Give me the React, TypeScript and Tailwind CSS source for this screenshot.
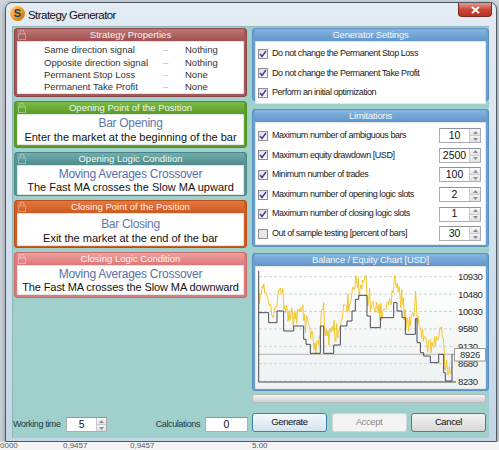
import React from 'react';

const steps: [number, number][] = [
  [20, 200], [50, 230], [75, 195], [95, 255], [125, 240], [155, 280], [162, 295], [175, 322],
  [205, 240], [215, 322], [245, 297], [265, 240], [285, 225], [300, 195], [310, 160], [320, 148],
  [345, 210], [355, 245], [385, 215], [425, 170], [435, 195], [450, 215], [460, 265], [490, 218],
  [495, 290], [505, 320], [515, 330], [535, 350], [560, 325], [575, 380], [580, 405], [600, 325],
];

const yLabels = ['10930', '10480', '10030', '9580', '9130', '8680', '8230'];

function Lock() {
  return (
    <svg className="absolute left-[1px] top-[0px]" width="8" height="11" viewBox="0 0 8 11">
      <path d="M2 5 V3 a2 2 0 0 1 4 0 V5" fill="none" stroke="white" strokeOpacity="0.35" strokeWidth="1" />
      <rect x="0.5" y="5" width="7" height="5.5" fill="none" stroke="white" strokeOpacity="0.35" strokeWidth="1" />
    </svg>
  );
}

function LeftPanel({ title, outer, head, children }: { title: string; outer: string; head: string; children: React.ReactNode }) {
  return (
    <div className={`rounded-[3px] border px-[2px] pb-[2px] flex flex-col ${outer}`}>
      <div className={`relative h-[12px] shrink-0 flex items-center justify-center text-[9.5px] leading-none text-white/95 ${head}`}>
        <Lock />
        {title}
      </div>
      <div className="flex-1 bg-white border border-black/10 rounded-[1px] flex flex-col items-center">{children}</div>
    </div>
  );
}

function RightPanel({ title, className, children }: { title: string; className: string; children: React.ReactNode }) {
  return (
    <div className={`rounded-[3px] border border-[#5b8fc2] bg-[#6a9fd2] px-[2px] pb-[2px] flex flex-col ${className}`}>
      <div className="h-[12px] shrink-0 flex items-center justify-center text-[9.5px] tracking-[-0.2px] leading-none text-white/95 bg-gradient-to-b from-[#86b6e0] to-[#6196cb]">
        {title}
      </div>
      <div className="flex-1 bg-white border border-black/10 rounded-[1px]">{children}</div>
    </div>
  );
}

function Check({ on = true }: { on?: boolean }) {
  return (
    <div className={`w-[10px] h-[10px] shrink-0 border border-[#8e8f8f] flex items-center justify-center ${on ? 'bg-gradient-to-br from-[#dcdcdc] to-[#ffffff]' : 'bg-[#e6e6e6]'}`}>
      {on && (
        <svg width="8" height="8" viewBox="0 0 8 8">
          <path d="M1 4 L3 6.5 L7 1" fill="none" stroke="#3b3ba6" strokeWidth="1.4" />
        </svg>
      )}
    </div>
  );
}

function Spin({ w = 11 }: { w?: number }) {
  return (
    <div className="flex flex-col h-full border-l border-[#c8ccd2]" style={{ width: w }}>
      <div className="flex-1 flex items-center justify-center bg-gradient-to-b from-[#f8f8f8] to-[#e4e4e4] border-b border-[#c8ccd2]">
        <svg width="5" height="3" viewBox="0 0 5 3"><path d="M0 3 L2.5 0 L5 3Z" fill="#8a8f96" /></svg>
      </div>
      <div className="flex-1 flex items-center justify-center bg-gradient-to-b from-[#f4f4f4] to-[#e0e0e0]">
        <svg width="5" height="3" viewBox="0 0 5 3"><path d="M0 0 L2.5 3 L5 0Z" fill="#8a8f96" /></svg>
      </div>
    </div>
  );
}

function NumBox({ value }: { value: string }) {
  return (
    <div className="ml-auto mr-[4px] w-[42px] h-[15px] flex border border-[#abadb3] border-t-[#8e9299] bg-white">
      <div className="flex-1 flex items-center justify-center text-[10.5px] text-[#111]">{value}</div>
      <Spin />
    </div>
  );
}

function LimitRow({ label, value, on = true }: { label: string; value: string; on?: boolean }) {
  return (
    <div className="h-[19.6px] flex items-center pl-[2px]">
      <Check on={on} />
      <span className="ml-[4px] text-[9px] tracking-[-0.45px] text-[#1a1a1a]">{label}</span>
      <NumBox value={value} />
    </div>
  );
}

function Chart() {
  const tx = (z: number) => z / 3 - 4;
  const ty = (z: number) => z / 3 - 21;
  let bal = `M${tx(steps[0][0])},${ty(steps[0][1])}`;
  for (let i = 1; i < steps.length; i++) bal += ` H${tx(steps[i][0])} V${ty(steps[i][1])}`;
  bal += ` H${tx(602)}`;
  const lvl = (x: number) => {
    let l = steps[0][1];
    for (const [sx, sl] of steps) if (x >= sx) l = sl;
    return l;
  };
  let s = 11;
  const rnd = () => (s = (s * 9301 + 49297) % 233280) / 233280;
  const pts: string[] = [];
  for (let x = 20; x <= 602; x += 2.6) {
    let off = 8 + 42 * Math.abs(Math.sin(x / 21)) + rnd() * 38;
    if (rnd() < 0.12) off -= 30;
    const y = Math.max(88, Math.min(402, lvl(x) - off));
    pts.push(`${tx(x).toFixed(1)},${ty(y).toFixed(1)}`);
  }
  return (
    <svg width="232" height="121" viewBox="0 0 232 121" className="block">
      {yLabels.map((l, i) => {
        const y = 9.7 + i * 17.4;
        return (
          <g key={l}>
            <line x1="3" x2="199" y1={y} y2={y} stroke="#c9c9c9" strokeDasharray="3 2" strokeWidth="0.8" />
            <text x="202" y={y + 3.5} fontSize="9.5" letterSpacing="-0.4" fill="#2a2a2a" fontFamily="Liberation Sans, Arial, sans-serif">{l}</text>
          </g>
        );
      })}
      <line x1="3" x2="199" y1="87.3" y2="87.3" stroke="#b4b4b4" strokeWidth="1" />
      <polyline points={pts.join(' ')} fill="none" stroke="#f4c21c" strokeWidth="0.9" />
      <path d={bal} fill="none" stroke="#4a4a58" strokeWidth="1" />
      <line x1="2.7" x2="2.7" y1="4" y2="115" stroke="#4a4a4a" strokeWidth="1" />
      <line x1="2.7" x2="200" y1="115" y2="115" stroke="#4a4a4a" strokeWidth="1" />
      <rect x="198.5" y="81.5" width="31" height="12.5" fill="white" stroke="#9a9a9a" strokeWidth="1" />
      <text x="214" y="91" textAnchor="middle" fontSize="9.5" letterSpacing="-0.3" fill="#2a2a2a" fontFamily="Liberation Sans, Arial, sans-serif">8926</text>
    </svg>
  );
}

function PropRow({ label, value }: { label: string; value: string }) {
  return (
    <div className="grid grid-cols-[119px_22px_50px] h-[12.3px] items-center text-[9.5px] leading-none text-[#333]">
      <span>{label}</span>
      <span className="text-[#b8b8b8]">–</span>
      <span>{value}</span>
    </div>
  );
}

function Button({ label, kind }: { label: string; kind: 'focus' | 'disabled' | 'normal' }) {
  const cls =
    kind === 'focus'
      ? 'border-[#3c7fb1] bg-gradient-to-b from-[#f4f9fc] to-[#d6e4ee] text-[#111]'
      : kind === 'disabled'
      ? 'border-[#d0d6d6] bg-[#f4f4f4] text-[#8a8a8a]'
      : 'border-[#707070] bg-gradient-to-b from-[#f2f2f2] to-[#d8d8d8] text-[#111]';
  return (
    <div className={`h-[19px] w-[75px] rounded-[3px] border flex items-center justify-center text-[9.5px] tracking-[-0.4px] ${cls}`}>
      {label}
    </div>
  );
}

export default function App() {
  return (
    <div className="w-[499px] h-[450px] overflow-hidden bg-[#cfd6dc] font-['Liberation_Sans',Arial,sans-serif] flex flex-col">
      <div className="pt-[2px] pl-[5px]">
        <div className="w-[492px] h-[440px] rounded-t-[7px] border border-[#4b5866] bg-gradient-to-b from-[#e3ebf3] via-[#d3e1ee] to-[#c3d6e8] flex flex-col shadow-[0_2px_6px_rgba(0,0,0,0.35)]">
          <div className="h-[23px] shrink-0 flex items-start">
            <div className="mt-[3px] ml-[4px] w-[15px] h-[15px] rounded-full bg-gradient-to-br from-[#ffd36a] via-[#f0a02a] to-[#b86a10] flex items-center justify-center text-[11px] font-bold text-[#2a3a5a] leading-none">
              S
            </div>
            <div className="ml-[3px] mt-[4px] text-[11.5px] tracking-[-0.55px] text-[#111]">Strategy Generator</div>
            <div className="ml-auto mr-[4px] w-[34px] h-[14px] rounded-b-[4px] border border-[#7a2a22] border-t-0 bg-gradient-to-b from-[#e59a8c] via-[#c9473a] to-[#b8331f] flex items-center justify-center">
              <svg width="9" height="8" viewBox="0 0 9 8">
                <path d="M1 1 L8 7 M8 1 L1 7" stroke="white" strokeWidth="2" />
              </svg>
            </div>
          </div>
          <div className="h-[412px] ml-[6px] mr-[7px] bg-[#a0d0cb] border-l border-t border-[#8fb4b6] flex pt-[1px]">
            {/* left column */}
            <div className="w-[235px] flex flex-col">
              <div className="ml-[1px] w-[233px] flex flex-col gap-[4px]">
                <LeftPanel title="Strategy Properties" outer="h-[69px] border-[#8d4646] bg-[#a55858]" head="bg-gradient-to-b from-[#bd7676] to-[#a05050]">
                  <div className="pt-[2px] pl-[26px] w-full">
                    <PropRow label="Same direction signal" value="Nothing" />
                    <PropRow label="Opposite direction signal" value="Nothing" />
                    <PropRow label="Permanent Stop Loss" value="None" />
                    <PropRow label="Permanent Take Profit" value="None" />
                  </div>
                </LeftPanel>
                <LeftPanel title="Opening Point of the Position" outer="h-[47px] border-[#4f8e24] bg-[#5e9f2c]" head="bg-gradient-to-b from-[#7dbb45] to-[#5a9a28]">
                  <div className="pt-[1px] text-[12px] leading-[14px] tracking-[-0.3px] text-[#6478ac]">Bar Opening</div>
                  <div className="text-[11px] leading-[14px] text-[#111]">Enter the market at the beginning of the bar</div>
                </LeftPanel>
                <LeftPanel title="Opening Logic Condition" outer="h-[44px] border-[#4a8585] bg-[#5a9797]" head="bg-gradient-to-b from-[#72acac] to-[#4f8b8b]">
                  <div className="pt-[2px] text-[12px] leading-[13px] tracking-[-0.25px] text-[#5a6ea8]">Moving Averages Crossover</div>
                  <div className="text-[11px] leading-[13px] text-[#111]">The Fast MA crosses the Slow MA upward</div>
                </LeftPanel>
                <LeftPanel title="Closing Point of the Position" outer="h-[48px] border-[#b84e1a] bg-[#cf5d24]" head="bg-gradient-to-b from-[#e5793d] to-[#cc5920]">
                  <div className="pt-[3px] text-[12px] leading-[14px] tracking-[-0.3px] text-[#6478ac]">Bar Closing</div>
                  <div className="text-[11px] leading-[14px] text-[#111]">Exit the market at the end of the bar</div>
                </LeftPanel>
                <LeftPanel title="Closing Logic Condition" outer="h-[46px] border-[#c96a6a] bg-[#dd7c7c]" head="bg-gradient-to-b from-[#eca0a0] to-[#de7777]">
                  <div className="pt-[2px] text-[12px] leading-[13px] tracking-[-0.25px] text-[#5a6ea8]">Moving Averages Crossover</div>
                  <div className="text-[11px] leading-[13px] text-[#111] tracking-[-0.1px]">The Fast MA crosses the Slow MA downward</div>
                </LeftPanel>
              </div>
              <div className="mt-auto mb-[6px] h-[15px] flex items-center text-[9px] tracking-[-0.4px] text-[#1e3a3a]">
                <span className="w-[53px]">Working time</span>
                <div className="w-[41px] h-[15px] flex border border-[#abadb3] border-t-[#8e9299] bg-white">
                  <div className="flex-1 flex items-center justify-center text-[10.5px] text-[#111]">5</div>
                  <Spin w={10} />
                </div>
                <span className="ml-auto">Calculations</span>
                <div className="ml-[5px] w-[43px] h-[15px] border border-[#abadb3] border-t-[#8e9299] bg-white flex items-center justify-center text-[10.5px] text-[#111] tracking-normal">
                  0
                </div>
              </div>
            </div>
            {/* right column */}
            <div className="ml-[4px] w-[237px] flex flex-col">
              <RightPanel title="Generator Settings" className="h-[73px]">
                <div className="pt-[2px]">
                  {['Do not change the Permanent Stop Loss', 'Do not change the Permanent Take Profit', 'Perform an initial optimization'].map((t) => (
                    <div key={t} className="h-[19.5px] flex items-center pl-[2px]">
                      <Check />
                      <span className="ml-[4px] text-[9px] tracking-[-0.45px] text-[#1a1a1a]">{t}</span>
                    </div>
                  ))}
                </div>
              </RightPanel>
              <RightPanel title="Limitations" className="mt-[8px] h-[138px]">
                <div className="pt-[3px]">
                  <LimitRow label="Maximum number of ambiguous bars" value="10" />
                  <LimitRow label="Maximum equity drawdown [USD]" value="2500" />
                  <LimitRow label="Minimum number of trades" value="100" />
                  <LimitRow label="Maximum number of opening logic slots" value="2" />
                  <LimitRow label="Maximum number of closing logic slots" value="1" />
                  <LimitRow label="Out of sample testing [percent of bars]" value="30" on={false} />
                </div>
              </RightPanel>
              <RightPanel title="Balance / Equity Chart [USD]" className="mt-[6px] h-[138px]">
                <div className="h-full bg-gradient-to-b from-[#ffffff] to-[#eef2f2]">
                  <Chart />
                </div>
              </RightPanel>
              <div className="mt-[3px] mr-[3px] h-[9px] rounded-[2px] border border-[#b4bcbc] bg-gradient-to-b from-[#f3f3f3] via-[#e2e2e2] to-[#d0d0d0]" />
              <div className="mt-[10px] mr-[3px] flex justify-between">
                <Button label="Generate" kind="focus" />
                <Button label="Accept" kind="disabled" />
                <Button label="Cancel" kind="normal" />
              </div>
            </div>
          </div>
        </div>
      </div>
      <div className="h-[8px] bg-[#f4f4f4] flex items-center text-[8px] leading-[8px] text-[#555] overflow-hidden">
        <span className="w-[63px]">0000</span>
        <span className="w-[67px]">0,9457</span>
        <span className="w-[122px]">0,9457</span>
        <span>5.00</span>
      </div>
    </div>
  );
}
